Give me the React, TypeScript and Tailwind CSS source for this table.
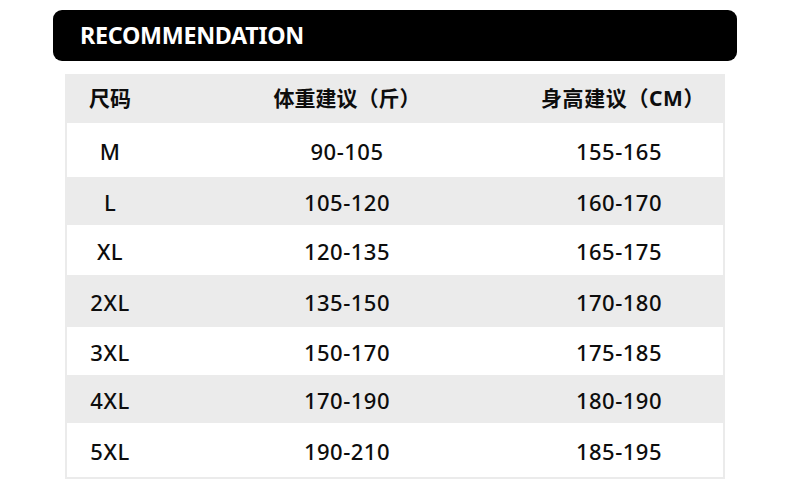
import React from "react";

const rows: { s: string; w: string; h: string; bg: boolean; ht: string }[] = [
  { s: "M", w: "90-105", h: "155-165", bg: false, ht: "h-[54px]" },
  { s: "L", w: "105-120", h: "160-170", bg: true, ht: "h-[48px]" },
  { s: "XL", w: "120-135", h: "165-175", bg: false, ht: "h-[50px]" },
  { s: "2XL", w: "135-150", h: "170-180", bg: true, ht: "h-[52px]" },
  { s: "3XL", w: "150-170", h: "175-185", bg: false, ht: "h-[48px]" },
  { s: "4XL", w: "170-190", h: "180-190", bg: true, ht: "h-[48px]" },
  { s: "5XL", w: "190-210", h: "185-195", bg: false, ht: "h-[54px]" },
];

export default function App() {
  return (
    <div
      className="w-[790px] h-[490px] bg-white overflow-hidden text-[#0d0d0d]"
      style={{ fontFamily: '"Noto Sans", "Noto Sans CJK SC", sans-serif' }}
    >
      <div className="ml-[53px] mt-[10px] w-[684px] h-[51px] rounded-[9px] bg-black flex items-center pl-[27px]">
        <span className="text-white font-bold text-[23.3px] tracking-[-0.3px] leading-none">
          RECOMMENDATION
        </span>
      </div>
      <div className="ml-[65px] mt-[13px] w-[660px] border-x-2 border-b-2 border-[#ebebeb]">
        <div className="grid grid-cols-[86px_388px_160px_1fr] h-[49px] items-center bg-[#ebebeb] font-bold text-[21px] -mx-[2px] pl-[2px]">
          <div className="text-center">尺码</div>
          <div className="text-center">体重建议（斤）</div>
          <div className="text-center tracking-[0.6px]">身高建议（CM）</div>
          <div />
        </div>
        {rows.map((r) => (
          <div
            key={r.s}
            className={`grid grid-cols-[86px_388px_156px_1fr] items-center font-medium text-[22px] tracking-[0.5px] pt-[3px] ${r.ht} ${r.bg ? "bg-[#ebebeb] -mx-[2px] pl-[2px] pr-[2px]" : "bg-white"}`}
          >
            <div className="text-center">{r.s}</div>
            <div className="text-center">{r.w}</div>
            <div className="text-center">{r.h}</div>
            <div />
          </div>
        ))}
      </div>
    </div>
  );
}
